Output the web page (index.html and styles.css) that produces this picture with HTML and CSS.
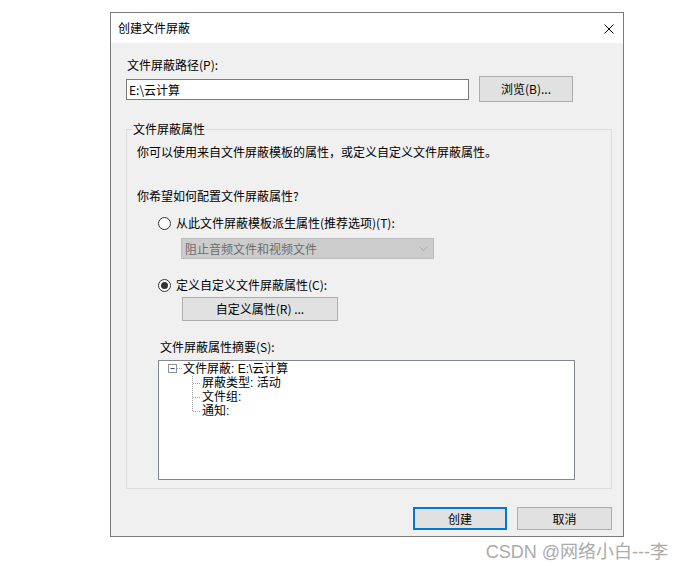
FILE: index.html
```html
<!DOCTYPE html>
<html lang="zh-CN">
<head>
<meta charset="utf-8">
<title>创建文件屏蔽</title>
<link rel="stylesheet" href="styles.css">
</head>
<body>
<div class="dialog">
  <div class="titlebar">
    <span class="title">创建文件屏蔽</span>
    <svg class="close" width="10" height="10" viewBox="0 0 10 10"><path d="M0.5 0.5L9.5 9.5M9.5 0.5L0.5 9.5" stroke="#000" stroke-width="1" fill="none"/></svg>
  </div>
  <div class="body">
    <div class="label">文件屏蔽路径(P):</div>
    <div class="path-row">
      <div class="input">E:\云计算</div>
      <div class="btn browse">浏览(B)...</div>
    </div>
    <div class="group">
      <div class="legend">文件屏蔽属性</div>
      <p class="text t1">你可以使用来自文件屏蔽模板的属性，或定义自定义文件屏蔽属性。</p>
      <p class="text t2">你希望如何配置文件屏蔽属性?</p>
      <div class="radio-row r1"><span class="radio"></span><span>从此文件屏蔽模板派生属性(推荐选项)(T):</span></div>
      <div class="select"><span>阻止音频文件和视频文件</span>
        <svg class="chev" width="9" height="5" viewBox="0 0 9 5"><path d="M0.5 0.5L4.5 4.5L8.5 0.5" stroke="#a6a6a6" fill="none"/></svg>
      </div>
      <div class="radio-row r2"><span class="radio checked"></span><span>定义自定义文件屏蔽属性(C):</span></div>
      <div class="btn custom">自定义属性(R) ...</div>
      <div class="text summary-label">文件屏蔽属性摘要(S):</div>
      <div class="tree">
        <div class="tree-root">
          <svg class="expander" width="15" height="14" viewBox="0 0 15 14">
            <rect x="0.5" y="2.5" width="8" height="8" fill="#fff" stroke="#919191"/>
            <path d="M2.5 6.5H6.5" stroke="#2b4c8c"/>
            <path d="M9 6.5H15" stroke="#a0a0a0" stroke-dasharray="1 1"/>
          </svg>
          <span>文件屏蔽: E:\云计算</span>
        </div>
        <div class="tree-children">
          <svg class="connectors" width="10" height="42" viewBox="0 0 10 42">
            <path d="M0.5 0V35.5" stroke="#a0a0a0" stroke-dasharray="1 1"/>
            <path d="M1 7.5H9M1 21.5H9M1 35.5H9" stroke="#a0a0a0" stroke-dasharray="1 1"/>
          </svg>
          <div class="child-list">
            <div class="tree-item">屏蔽类型: 活动</div>
            <div class="tree-item">文件组:</div>
            <div class="tree-item">通知:</div>
          </div>
        </div>
      </div>
    </div>
    <div class="footer">
      <div class="btn action default">创建</div>
      <div class="btn action cancel">取消</div>
    </div>
  </div>
</div>
<div class="watermark">CSDN @网络小白---李</div>
</body>
</html>
```

FILE: styles.css
```css
* { box-sizing: border-box; }

html, body {
  margin: 0;
  padding: 0;
  background: #ffffff;
}

body {
  font-family: "Noto Sans CJK SC", "Liberation Sans", sans-serif;
  font-size: 12px;
  color: #000;
}

.dialog {
  margin: 12px 0 0 110px;
  width: 514px;
  height: 525px;
  border: 1px solid #7a7a7a;
  background: #f0f0f0;
  display: flex;
  flex-direction: column;
}

.titlebar {
  height: 30px;
  background: #fff;
  display: flex;
  align-items: center;
  justify-content: space-between;
  padding: 0 9px 0 7px;
}

.title {
  font-size: 12px;
  line-height: 16px;
}

.close {
  display: block;
  margin-top: 1px;
}

.body {
  flex: 1;
  padding: 14px 11px 0 15px;
}

.label {
  line-height: 16px;
  padding-left: 1px;
}

.path-row {
  margin-top: 3px;
  height: 26px;
  display: flex;
  align-items: center;
}

.input {
  width: 343px;
  height: 21px;
  border: 1px solid #7a7a7a;
  background: #fff;
  line-height: 19px;
  padding-left: 2px;
}

.btn {
  background: #e1e1e1;
  border: 1px solid #adadad;
  display: flex;
  align-items: center;
  justify-content: center;
  line-height: 16px;
}

.browse {
  margin-left: 10px;
  width: 94px;
  height: 26px;
}

.group {
  margin-top: 27px;
  width: 486px;
  border: 1px solid #dcdcdc;
  padding: 0 0 8px 10px;
}

.legend {
  width: fit-content;
  margin: -9px 0 0 -5px;
  padding: 0 1px;
  line-height: 16px;
  background: #f0f0f0;
}

.text {
  margin: 0;
  line-height: 16px;
}

.t1 { margin-top: 7px; }
.t2 { margin-top: 28px; }

.radio-row {
  display: flex;
  align-items: center;
  height: 16px;
  line-height: 16px;
  margin-left: 21px;
}

.r1 { margin-top: 11px; }
.r2 { margin-top: 18px; }

.radio {
  width: 13px;
  height: 13px;
  border: 1px solid #333;
  border-radius: 50%;
  background: #fff;
  margin-right: 5px;
  display: flex;
  align-items: center;
  justify-content: center;
}

.radio.checked::after {
  content: "";
  width: 7px;
  height: 7px;
  border-radius: 50%;
  background: #333;
}

.select {
  margin: 7px 0 0 44px;
  width: 253px;
  height: 21px;
  background: #cccccc;
  border: 1px solid #bcbcbc;
  color: #6d6d6d;
  display: flex;
  align-items: center;
  justify-content: space-between;
  padding: 0 3px 0 3px;
  line-height: 16px;
}

.chev {
  display: block;
  margin-right: 2px;
}

.custom {
  margin: 4px 0 0 45px;
  width: 156px;
  height: 24px;
}

.summary-label {
  margin: 18px 0 0 23px;
}

.tree {
  margin: 5px 0 0 21px;
  width: 417px;
  height: 120px;
  background: #fff;
  border: 1px solid #828790;
  padding: 1px 0 0 9px;
  line-height: 14px;
  font-family: "Liberation Sans", "Noto Sans CJK SC", sans-serif;
}

.tree-root {
  display: flex;
  align-items: center;
  height: 14px;
}

.expander {
  display: block;
}

.tree-children {
  display: flex;
  margin-left: 24px;
}

.connectors {
  display: block;
}

.tree-item {
  height: 14px;
  line-height: 14px;
}

.footer {
  margin-top: 18px;
  display: flex;
  justify-content: flex-end;
  gap: 10px;
}

.action {
  height: 23px;
}

.default {
  width: 94px;
  border: 2px solid #0078d7;
}

.cancel {
  width: 95px;
}

.watermark {
  margin-top: 5px;
  text-align: right;
  padding-right: 15px;
  font-family: "Liberation Sans", "Noto Sans CJK SC", sans-serif;
  font-size: 18px;
  line-height: 20px;
  color: #ababab;
}
```
